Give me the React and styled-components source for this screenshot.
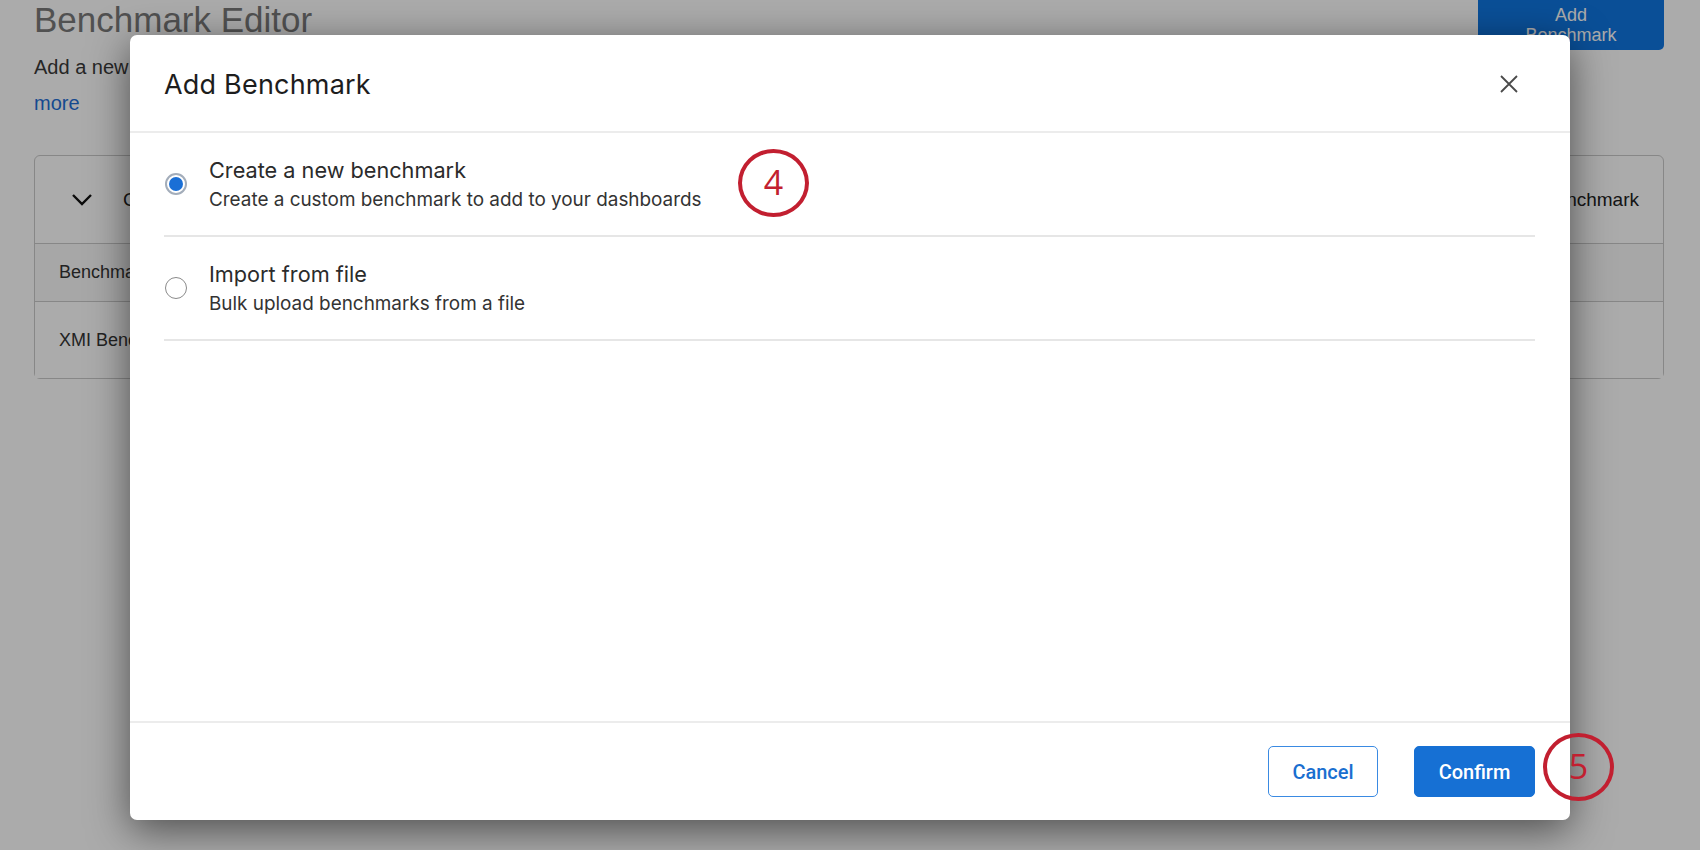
import React from "react";
import styled, { createGlobalStyle } from "styled-components";

const GlobalStyle = createGlobalStyle`
  html, body {
    margin: 0;
    padding: 0;
    background: #fff;
    overflow: hidden;
  }
  * { box-sizing: border-box; }
`;

const Page = styled.div`
  position: relative;
  width: 1700px;
  height: 850px;
  overflow: hidden;
  padding: 0 36px 0 34px;
  font-family: "Liberation Sans", Arial, sans-serif;
  color: #2a2a2a;
`;

const TopBar = styled.div`
  display: flex;
  justify-content: space-between;
  align-items: flex-start;
  height: 49px;
`;

const PageTitle = styled.h1`
  margin: 0;
  font-size: 35px;
  line-height: 40px;
  font-weight: 400;
  color: #7a7a7a;
`;

const PrimaryAction = styled.button`
  width: 186px;
  height: 50px;
  padding: 5px 40px;
  border: none;
  border-radius: 0 0 5px 5px;
  background: #1076e1;
  color: #fff;
  font-family: "Liberation Sans", Arial, sans-serif;
  font-size: 18px;
  line-height: 20px;
`;

const Description = styled.p`
  margin: 0;
  font-size: 20px;
  line-height: 36px;
  color: #3a3a3a;
  white-space: nowrap;
`;

const Link = styled.a`
  color: #1f6fd6;
`;

const Card = styled.div`
  margin-top: 34px;
  border: 1px solid #c9c9c9;
  border-radius: 6px;
`;

const GroupRow = styled.div`
  display: flex;
  align-items: center;
  height: 87px;
  padding: 0 24px 0 36px;
  font-size: 19px;
  color: #222;
`;

const GroupName = styled.span`
  flex: 1;
  margin-left: 30px;
`;

const TableRow = styled.div`
  display: grid;
  grid-template-columns: 910px 460px 1fr;
  align-items: center;
  height: ${(p) => p.h}px;
  padding: 0 24px;
  border-top: 1px solid #c9c9c9;
  background: ${(p) => (p.head ? "#fafafa" : "#fff")};
  font-size: 18px;
  color: #333;
`;

const Overlay = styled.div`
  position: absolute;
  inset: 0;
  background: rgba(0, 0, 0, 0.33);
`;

const Modal = styled.div`
  position: absolute;
  left: 130px;
  top: 35px;
  width: 1440px;
  height: 785px;
  display: flex;
  flex-direction: column;
  background: #fff;
  border-radius: 7px;
  box-shadow: 0 10px 40px rgba(0, 0, 0, 0.55);
  font-family: Inter, "Noto Sans", sans-serif;
`;

const ModalHeader = styled.div`
  display: flex;
  align-items: center;
  justify-content: space-between;
  height: 98px;
  padding: 2px 52px 0 34px;
  border-bottom: 2px solid #ececec;
`;

const ModalTitle = styled.h2`
  margin: 0;
  font-size: 27px;
  font-weight: 400;
  color: #1d1d1d;
  letter-spacing: 0.2px;
`;

const CloseButton = styled.button`
  display: flex;
  padding: 0;
  border: none;
  background: none;
`;

const ModalBody = styled.div`
  flex: 1;
  padding: 0 35px 0 34px;
`;

const Option = styled.label`
  display: flex;
  align-items: center;
  gap: 22px;
  padding: 22px 0 20px 1px;
  border-bottom: 2px solid #e6e6e6;
`;

const Radio = styled.span`
  flex: none;
  display: flex;
  align-items: center;
  justify-content: center;
  width: 22px;
  height: 22px;
  margin-top: -2px;
  border-radius: 50%;
  border: ${(p) => (p.checked ? "2px solid #a3adba" : "1.5px solid #8a8a8a")};
  background: #fff;

  &::after {
    content: "";
    display: ${(p) => (p.checked ? "block" : "none")};
    width: 14px;
    height: 14px;
    border-radius: 50%;
    background: #1a6fd6;
  }
`;

const OptionText = styled.div`
  display: flex;
  flex-direction: column;
`;

const OptionTitle = styled.span`
  font-size: 21.7px;
  line-height: 30px;
  color: #2b2b2b;
`;

const OptionSub = styled.span`
  font-size: 18.9px;
  line-height: 30px;
  color: #333;
`;

const ModalFooter = styled.div`
  display: flex;
  align-items: center;
  justify-content: flex-end;
  gap: 36px;
  height: 99px;
  padding: 0 35px;
  border-top: 2px solid #ececec;
`;

const Button = styled.button`
  height: 51px;
  width: ${(p) => p.w}px;
  border-radius: 5px;
  border: 1.5px solid ${(p) => (p.primary ? "#1670d4" : "#3a8ae2")};
  background: ${(p) => (p.primary ? "#1670d4" : "#fff")};
  color: ${(p) => (p.primary ? "#fff" : "#1a6fd0")};
  font-family: Roboto, "Liberation Sans", Arial, sans-serif;
  font-size: 20px;
  font-weight: 500;
`;

const Step = styled.div`
  position: absolute;
  left: ${(p) => p.x}px;
  top: ${(p) => p.y}px;
  width: 71px;
  height: 68px;
  display: flex;
  align-items: center;
  justify-content: center;
  border: 4px solid #c21f30;
  border-radius: 50%;
  color: #c21f30;
  font-family: "Open Sans", sans-serif;
  font-size: 34px;
  font-weight: 400;
  line-height: 1;
  padding-bottom: 3px;
`;

const App = () => {
  return (
    <>
      <GlobalStyle />
      <Page>
        <TopBar>
          <PageTitle>Benchmark Editor</PageTitle>
          <PrimaryAction>Add Benchmark</PrimaryAction>
        </TopBar>
        <Description>
          Add a new benchmark or edit existing benchmarks you want to use. Benchmarks let you compare
          results to targets and analyze data on your dashboards. Learn
          <br />
          <Link>more</Link>
        </Description>
        <Card>
          <GroupRow>
            <svg width="22" height="14" viewBox="0 0 22 14" fill="none">
              <path d="M2 2l9 9 9-9" stroke="#111" strokeWidth="2.4" />
            </svg>
            <GroupName>CSAT (NPS)</GroupName>
            <span>1 benchmark</span>
          </GroupRow>
          <TableRow h={58} head>
            <span>Benchmark name</span>
            <span>Type</span>
            <span>Score</span>
          </TableRow>
          <TableRow h={77}>
            <span>XMI Benchmarks</span>
            <span>NPS</span>
            <span>26.4</span>
          </TableRow>
        </Card>
        <Overlay />
        <Modal>
          <ModalHeader>
            <ModalTitle>Add Benchmark</ModalTitle>
            <CloseButton>
              <svg width="18" height="18" viewBox="0 0 18 18">
                <path d="M1 1l16 16M17 1L1 17" stroke="#4a4a4a" strokeWidth="1.8" />
              </svg>
            </CloseButton>
          </ModalHeader>
          <ModalBody>
            <Option>
              <Radio checked />
              <OptionText>
                <OptionTitle>Create a new benchmark</OptionTitle>
                <OptionSub>Create a custom benchmark to add to your dashboards</OptionSub>
              </OptionText>
            </Option>
            <Option>
              <Radio />
              <OptionText>
                <OptionTitle>Import from file</OptionTitle>
                <OptionSub>Bulk upload benchmarks from a file</OptionSub>
              </OptionText>
            </Option>
          </ModalBody>
          <ModalFooter>
            <Button w={110}>Cancel</Button>
            <Button w={121} primary>
              Confirm
            </Button>
          </ModalFooter>
          <Step x={608} y={114}>4</Step>
          <Step x={1413} y={698}>5</Step>
        </Modal>
      </Page>
    </>
  );
};

export default App;
